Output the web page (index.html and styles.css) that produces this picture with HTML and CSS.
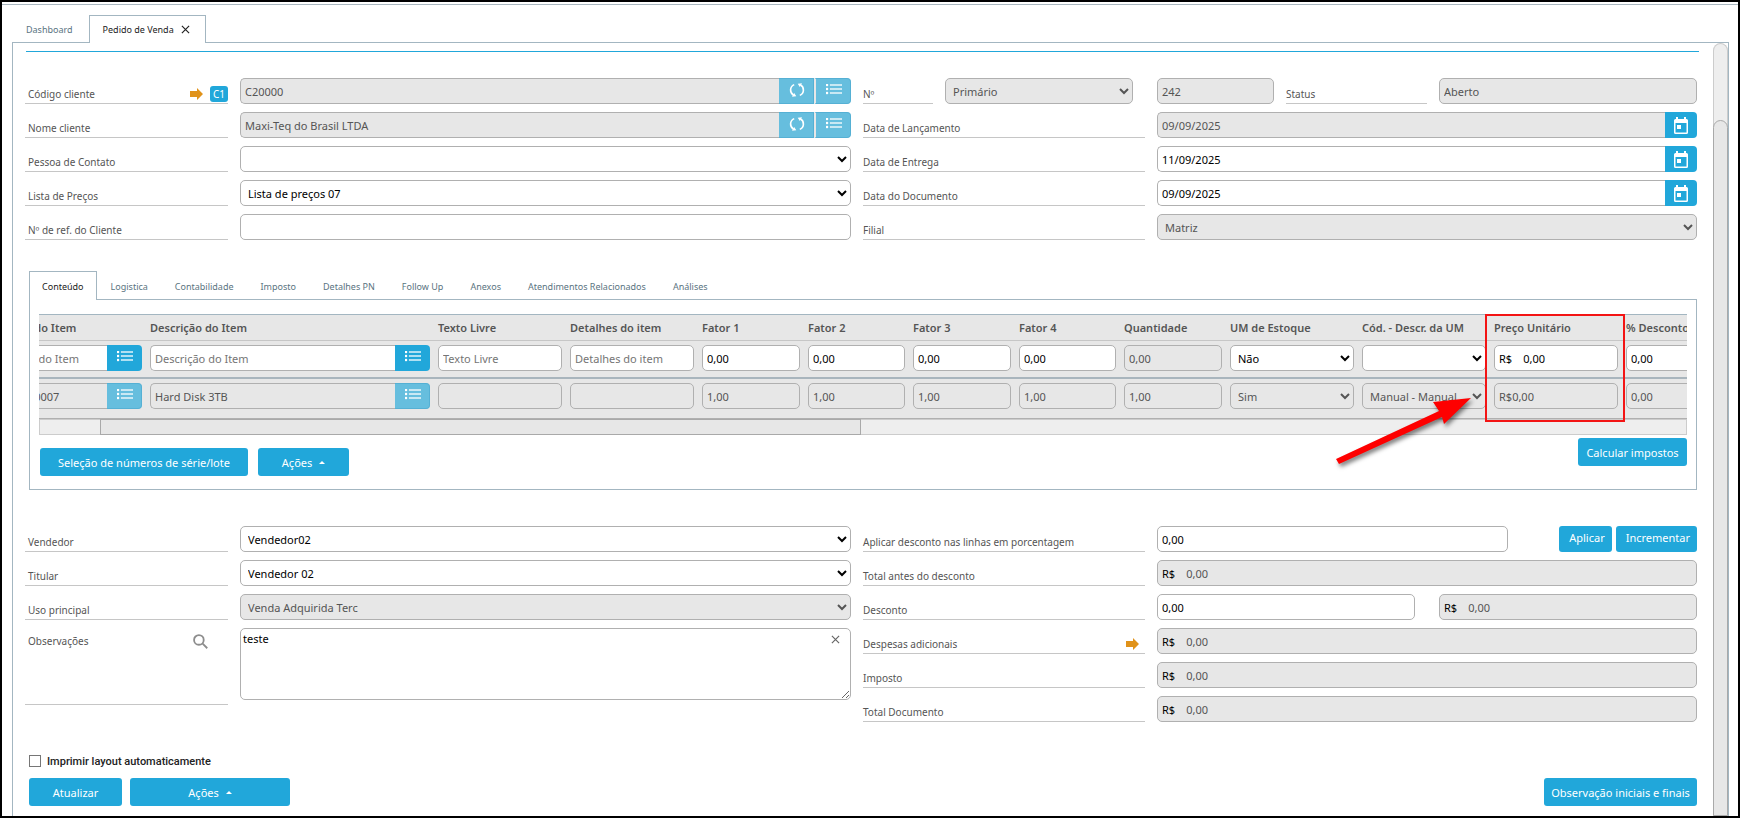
FILE: index.html
```html
<!DOCTYPE html>
<html lang="pt-BR">

<head>
    <meta charset="UTF-8">
    <meta name="viewport" content="width=device-width, initial-scale=1.0">
    <title>Pedido de Venda</title>

    <link rel="stylesheet" href="styles.css">
</head>

<body>
    <svg class="simbolos" aria-hidden="true">
        <symbol id="icoLista" viewBox="0 0 16 11">
            <path d="M0 0h2v2H0zM0 4h2v2H0zM0 8h2v2H0zM4 0.500h12v1H4zM4 4.500h12v1H4zM4 8.500h12v1H4z" fill="currentColor" stroke="currentColor" stroke-width="0.300" />
        </symbol>
        <symbol id="icoAtualiza" viewBox="0 0 16 16">
            <path d="M5.200 2.600C0.500 4.800 0.500 10.800 4.600 13.200M10.800 13.400C15.500 11.200 15.500 5.200 11.400 2.800" fill="none" stroke="currentColor" stroke-width="1.600" />
            <path d="M3 14.800L7.300 14.300 5.200 10.900zM13 1.200L8.700 1.700 10.800 5.100z" fill="currentColor" />
        </symbol>
        <symbol id="icoData" viewBox="0 0 14 17">
            <path d="M2 0h2v2h6V0h2v2h.500A1.500 1.500 0 0 1 14 3.500v12A1.500 1.500 0 0 1 12.500 17h-11A1.500 1.500 0 0 1 0 15.500v-12A1.500 1.500 0 0 1 1.500 2H2zM1.500 6v9.500h11V6zM3 8h4v4H3z" fill="currentColor" fill-rule="evenodd" />
        </symbol>
        <symbol id="icoSeta" viewBox="0 0 13 12">
            <path d="M0 3h7V0l6 6-6 6V9H0z" fill="#e0921a" />
        </symbol>
        <symbol id="icoFechar" viewBox="0 0 10 10">
            <path d="M1 1l8 8M9 1l-8 8" stroke="currentColor" stroke-width="1.300" />
        </symbol>
    </svg>

    <nav class="abas">
        <a class="aba" href="#">Dashboard</a>
        <a class="aba ativa" href="#">Pedido de Venda <svg class="fechar"><use href="#icoFechar" /></svg></a>
    </nav>

    <main class="painel">
        <div class="conteudo">
            <hr class="linhaTopo">

            <form class="formulario">
                <div class="coluna">
                    <div class="linha esq">
                        <div class="rotulo">
                            <label for="iCodigo">Código cliente</label>
                            <svg class="seta"><use href="#icoSeta" /></svg>
                            <button type="button" class="c1">C1</button>
                        </div>
                        <div class="grupo">
                            <input class="campo" type="text" id="iCodigo" value="C20000" disabled>
                            <button type="button" class="icone" aria-label="Atualizar código" disabled><svg class="atualiza"><use href="#icoAtualiza" /></svg></button>
                            <button type="button" class="icone" aria-label="Listar códigos" disabled><svg class="lista"><use href="#icoLista" /></svg></button>
                        </div>
                    </div>
                    <div class="linha esq">
                        <div class="rotulo"><label for="iNome">Nome cliente</label></div>
                        <div class="grupo">
                            <input class="campo" type="text" id="iNome" value="Maxi-Teq do Brasil LTDA" disabled>
                            <button type="button" class="icone" aria-label="Atualizar nome" disabled><svg class="atualiza"><use href="#icoAtualiza" /></svg></button>
                            <button type="button" class="icone" aria-label="Listar nomes" disabled><svg class="lista"><use href="#icoLista" /></svg></button>
                        </div>
                    </div>
                    <div class="linha esq">
                        <div class="rotulo"><label for="iContato">Pessoa de Contato</label></div>
                        <select class="campo" id="iContato"><option></option></select>
                    </div>
                    <div class="linha esq">
                        <div class="rotulo"><label for="iPrecos">Lista de Preços</label></div>
                        <select class="campo" id="iPrecos"><option>Lista de preços 07</option></select>
                    </div>
                    <div class="linha esq">
                        <div class="rotulo"><label for="iRef">Nº de ref. do Cliente</label></div>
                        <input class="campo" type="text" id="iRef">
                    </div>
                </div>

                <div class="coluna">
                    <div class="linha dir">
                        <div class="numero">
                            <div class="rotulo"><label for="iSerie">Nº</label></div>
                            <select class="campo" id="iSerie" disabled><option>Primário</option></select>
                        </div>
                        <div class="status">
                            <input class="campo" type="text" aria-label="Número do pedido" value="242" disabled>
                            <div class="rotulo"><label for="iStatus">Status</label></div>
                            <input class="campo" type="text" id="iStatus" value="Aberto" disabled>
                        </div>
                    </div>
                    <div class="linha dir">
                        <div class="rotulo"><label for="iLanc">Data de Lançamento</label></div>
                        <div class="grupo">
                            <input class="campo" type="text" id="iLanc" value="09/09/2025" disabled>
                            <button type="button" class="icone data" aria-label="Escolher data de lançamento"><svg class="calendario"><use href="#icoData" /></svg></button>
                        </div>
                    </div>
                    <div class="linha dir">
                        <div class="rotulo"><label for="iEntrega">Data de Entrega</label></div>
                        <div class="grupo">
                            <input class="campo" type="text" id="iEntrega" value="11/09/2025">
                            <button type="button" class="icone data" aria-label="Escolher data de entrega"><svg class="calendario"><use href="#icoData" /></svg></button>
                        </div>
                    </div>
                    <div class="linha dir">
                        <div class="rotulo"><label for="iDoc">Data do Documento</label></div>
                        <div class="grupo">
                            <input class="campo" type="text" id="iDoc" value="09/09/2025">
                            <button type="button" class="icone data" aria-label="Escolher data do documento"><svg class="calendario"><use href="#icoData" /></svg></button>
                        </div>
                    </div>
                    <div class="linha dir">
                        <div class="rotulo"><label for="iFilial">Filial</label></div>
                        <select class="campo" id="iFilial" disabled><option>Matriz</option></select>
                    </div>
                </div>
            </form>

            <nav class="subAbas">
                <a class="subAba ativa" href="#">Conteúdo</a>
                <a class="subAba" href="#">Logistica</a>
                <a class="subAba" href="#">Contabilidade</a>
                <a class="subAba" href="#">Imposto</a>
                <a class="subAba" href="#">Detalhes PN</a>
                <a class="subAba" href="#">Follow Up</a>
                <a class="subAba" href="#">Anexos</a>
                <a class="subAba" href="#">Atendimentos Relacionados</a>
                <a class="subAba" href="#">Análises</a>
            </nav>

            <section class="itens">
                <div class="rolagem">
                    <table>
                        <colgroup>
                            <col class="colItem">
                            <col class="colDescr">
                            <col class="colTexto">
                            <col class="colTexto">
                            <col class="colFator">
                            <col class="colFator2">
                            <col class="colFator">
                            <col class="colFator2">
                            <col class="colFator">
                            <col class="colTexto">
                            <col class="colTexto">
                            <col class="colTexto">
                            <col class="colTexto">
                        </colgroup>
                        <thead>
                            <tr>
                                <th>Código do Item</th>
                                <th>Descrição do Item</th>
                                <th>Texto Livre</th>
                                <th>Detalhes do item</th>
                                <th>Fator 1</th>
                                <th>Fator 2</th>
                                <th>Fator 3</th>
                                <th>Fator 4</th>
                                <th>Quantidade</th>
                                <th>UM de Estoque</th>
                                <th>Cód. - Descr. da UM</th>
                                <th>Preço Unitário</th>
                                <th>% Desconto</th>
                            </tr>
                        </thead>
                        <tbody>
                            <tr class="novo">
                                <td>
                                    <div class="grupo">
                                        <input class="campo" type="text" aria-label="Código do Item" placeholder="Código do Item">
                                        <button type="button" class="icone" aria-label="Listar itens"><svg class="lista"><use href="#icoLista" /></svg></button>
                                    </div>
                                </td>
                                <td>
                                    <div class="grupo">
                                        <input class="campo" type="text" aria-label="Descrição do Item" placeholder="Descrição do Item">
                                        <button type="button" class="icone" aria-label="Listar descrições"><svg class="lista"><use href="#icoLista" /></svg></button>
                                    </div>
                                </td>
                                <td><input class="campo" type="text" aria-label="Texto Livre" placeholder="Texto Livre"></td>
                                <td><input class="campo" type="text" aria-label="Detalhes do item" placeholder="Detalhes do item"></td>
                                <td><input class="campo" type="text" aria-label="Fator 1" value="0,00"></td>
                                <td><input class="campo" type="text" aria-label="Fator 2" value="0,00"></td>
                                <td><input class="campo" type="text" aria-label="Fator 3" value="0,00"></td>
                                <td><input class="campo" type="text" aria-label="Fator 4" value="0,00"></td>
                                <td><input class="campo" type="text" aria-label="Quantidade" value="0,00" disabled></td>
                                <td><select class="campo" aria-label="UM de Estoque"><option>Não</option></select></td>
                                <td><select class="campo" aria-label="Descrição da UM"><option></option></select></td>
                                <td><div class="campo moeda"><span>R$</span><input type="text" aria-label="Preço Unitário" value="0,00"></div></td>
                                <td><input class="campo" type="text" aria-label="% Desconto" value="0,00"></td>
                            </tr>
                            <tr>
                                <td>
                                    <div class="grupo">
                                        <input class="campo" type="text" aria-label="Código do Item, linha 1" value="I000000007" disabled>
                                        <button type="button" class="icone" aria-label="Listar itens, linha 1" disabled><svg class="lista"><use href="#icoLista" /></svg></button>
                                    </div>
                                </td>
                                <td>
                                    <div class="grupo">
                                        <input class="campo" type="text" aria-label="Descrição do Item, linha 1" value="Hard Disk 3TB" disabled>
                                        <button type="button" class="icone" aria-label="Listar descrições, linha 1" disabled><svg class="lista"><use href="#icoLista" /></svg></button>
                                    </div>
                                </td>
                                <td><input class="campo" type="text" aria-label="Texto Livre, linha 1" disabled></td>
                                <td><input class="campo" type="text" aria-label="Detalhes do item, linha 1" disabled></td>
                                <td><input class="campo" type="text" aria-label="Fator 1, linha 1" value="1,00" disabled></td>
                                <td><input class="campo" type="text" aria-label="Fator 2, linha 1" value="1,00" disabled></td>
                                <td><input class="campo" type="text" aria-label="Fator 3, linha 1" value="1,00" disabled></td>
                                <td><input class="campo" type="text" aria-label="Fator 4, linha 1" value="1,00" disabled></td>
                                <td><input class="campo" type="text" aria-label="Quantidade, linha 1" value="1,00" disabled></td>
                                <td><select class="campo" aria-label="UM de Estoque, linha 1" disabled><option>Sim</option></select></td>
                                <td><select class="campo" aria-label="Descrição da UM, linha 1" disabled><option>Manual - Manual</option></select></td>
                                <td><input class="campo" type="text" aria-label="Preço Unitário, linha 1" value="R$0,00" disabled></td>
                                <td><input class="campo" type="text" aria-label="% Desconto, linha 1" value="0,00" disabled></td>
                            </tr>
                        </tbody>
                    </table>
                </div>
                <div class="barraH"><div class="barraHPolegar"></div></div>

                <div class="acoesItens">
                    <button type="button" class="botao serie">Seleção de números de série/lote</button>
                    <button type="button" class="botao acoes">Ações <span class="caret"></span></button>
                    <button type="button" class="botao calcular">Calcular impostos</button>
                </div>

                <!-- Destaque do preço unitário -->
                <div class="destaque"></div>
                <svg class="flecha" viewBox="0 0 145 80">
                    <path d="M0 61L103 13 97 4 135 0 108 26 106 19 3 66z" fill="#fe0000" />
                </svg>
            </section>

            <form class="formulario rodape">
                <div class="coluna">
                    <div class="linha esq">
                        <div class="rotulo"><label for="iVendedor">Vendedor</label></div>
                        <select class="campo" id="iVendedor"><option>Vendedor02</option></select>
                    </div>
                    <div class="linha esq">
                        <div class="rotulo"><label for="iTitular">Titular</label></div>
                        <select class="campo" id="iTitular"><option>Vendedor 02</option></select>
                    </div>
                    <div class="linha esq">
                        <div class="rotulo"><label for="iUso">Uso principal</label></div>
                        <select class="campo" id="iUso" disabled><option>Venda Adquirida Terc</option></select>
                    </div>
                    <div class="linha esq">
                        <div class="rotulo alto">
                            <label for="iObs">Observações</label>
                            <svg class="lupa" viewBox="0 0 14 14"><path d="M9 9L13.300 13.300M5.500 1a4.500 4.500 0 1 0 0 9 4.500 4.500 0 0 0 0-9z" fill="none" stroke="#8d8d8d" stroke-width="1.700" /></svg>
                        </div>
                        <div class="obs">
                            <textarea class="campo" id="iObs">teste</textarea>
                            <button type="button" class="limpar" aria-label="Limpar observações"><svg class="fechar"><use href="#icoFechar" /></svg></button>
                        </div>
                    </div>
                </div>

                <div class="coluna">
                    <div class="linha dir">
                        <div class="rotulo"><label for="iAplicar">Aplicar desconto nas linhas em porcentagem</label></div>
                        <div class="aplicar">
                            <input class="campo" type="text" id="iAplicar" value="0,00">
                            <button type="button" class="botao menor">Aplicar</button>
                            <button type="button" class="botao menor">Incrementar</button>
                        </div>
                    </div>
                    <div class="linha dir">
                        <div class="rotulo"><label for="iAntes">Total antes do desconto</label></div>
                        <div class="campo moeda inativo"><span>R$</span><input type="text" id="iAntes" value="0,00" disabled></div>
                    </div>
                    <div class="linha dir">
                        <div class="rotulo"><label for="iDesc">Desconto</label></div>
                        <div class="desconto">
                            <input class="campo" type="text" id="iDesc" value="0,00">
                            <div class="campo moeda inativo"><span>R$</span><input type="text" aria-label="Valor do desconto" value="0,00" disabled></div>
                        </div>
                    </div>
                    <div class="linha dir">
                        <div class="rotulo">
                            <label for="iDespesas">Despesas adicionais</label>
                            <svg class="seta"><use href="#icoSeta" /></svg>
                        </div>
                        <div class="campo moeda inativo"><span>R$</span><input type="text" id="iDespesas" value="0,00" disabled></div>
                    </div>
                    <div class="linha dir">
                        <div class="rotulo"><label for="iImposto">Imposto</label></div>
                        <div class="campo moeda inativo"><span>R$</span><input type="text" id="iImposto" value="0,00" disabled></div>
                    </div>
                    <div class="linha dir">
                        <div class="rotulo"><label for="iTotal">Total Documento</label></div>
                        <div class="campo moeda inativo"><span>R$</span><input type="text" id="iTotal" value="0,00" disabled></div>
                    </div>
                </div>
            </form>

            <div class="imprimir">
                <input type="checkbox" id="iImprimir">
                <label for="iImprimir">Imprimir layout automaticamente</label>
            </div>
            <div class="acoesPedido">
                <button type="button" class="botao atualizar">Atualizar</button>
                <button type="button" class="botao acoesMaior">Ações <span class="caret"></span></button>
                <button type="button" class="botao finais">Observação iniciais e finais</button>
            </div>
        </div>
        <div class="barraV"><div class="barraVPolegar"></div></div>
    </main>
</body>

</html>
```

FILE: styles.css
```css
* {
    margin: 0;
    padding: 0;
    box-sizing: border-box;
}

body {
    display: flex;
    flex-direction: column;
    height: 100vh;
    overflow: hidden;
    border: 2px solid #000;
    background-color: #fff;
    color: #555;
    font-family: "Noto Sans", sans-serif;
    font-size: 11px;
}

body::before {
    content: "";
    margin-top: 2px;
    border-top: 1px solid #a9b7c0;
}

input,
select,
textarea,
button {
    font-family: inherit;
    font-size: 11px;
}

a {
    color: #5a7481;
    text-decoration: none;
}

.simbolos {
    display: none;
}

/* Abas principais */
.abas {
    display: flex;
    flex-shrink: 0;
    height: 28px;
    margin: 10px 0 0 10px;
    position: relative;
    z-index: 1;
}

.aba {
    display: flex;
    align-items: center;
    gap: 7px;
    height: 28px;
    padding: 0 16px 0 14px;
    font-size: 9px;
}

.aba.ativa {
    padding: 0 15px 0 13px;
    border: 1px solid #a3b6c1;
    border-bottom: none;
    background-color: #fff;
    color: #222;
}

.fechar {
    width: 9px;
    height: 9px;
}

/* Painel */
.painel {
    display: flex;
    flex: 1;
    min-height: 0;
    margin: -1px 9px 0 10px;
    border: 1px solid #a3b6c1;
    border-bottom: none;
}

.conteudo {
    flex: 1;
    min-width: 0;
    padding: 8px 14px 0 12px;
}

.linhaTopo {
    margin-left: 1px;
    border: none;
    border-top: 1px solid #21a7da;
}

.barraV {
    width: 15px;
    border: 1px solid #ccc;
    border-bottom: none;
    border-radius: 8px 8px 0 0;
    background-color: #eee;
    padding-top: 76px;
}

.barraVPolegar {
    height: 100%;
    border: 1px solid #a9a9a9;
    border-radius: 8px 8px 0 0;
    background-color: #e7e7e7;
    margin: 0 -1px;
}

/* Formulários */
.formulario {
    display: grid;
    grid-template-columns: 826fr 834fr;
    gap: 12px;
    margin: 26px 2px 0 0;
}

.coluna {
    display: flex;
    flex-direction: column;
    gap: 8px;
}

.linha {
    display: grid;
    gap: 12px;
}

.esq {
    grid-template-columns: 203fr 611fr;
}

.dir {
    grid-template-columns: 282fr 540fr;
}

.rotulo {
    display: flex;
    align-items: center;
    height: 26px;
    padding: 6px 0 0 3px;
    border-bottom: 1px solid #c6c6c6;
    font-size: 10px;
}

.dir .rotulo {
    padding-left: 0;
}

.rotulo label {
    flex: 1;
    white-space: nowrap;
}

.seta {
    width: 13px;
    height: 12px;
    margin-right: 6px;
}

.c1 {
    width: 18px;
    height: 16px;
    margin-left: 1px;
    border: none;
    border-radius: 3px;
    background-color: #21a7da;
    color: #fff;
    font-size: 10px;
    line-height: 16px;
}

.campo {
    width: 100%;
    min-width: 0;
    height: 26px;
    padding: 0 4px;
    border: 1px solid #b0b0b0;
    border-radius: 5px;
    background-color: #fff;
    color: #000;
}

.campo:disabled,
.campo.inativo {
    background-color: #e7e7e7;
    color: #555;
    opacity: 1;
}

select.campo {
    padding: 0 3px;
}

::placeholder {
    color: #757575;
}

.grupo {
    display: flex;
}

.grupo .campo {
    flex: 1;
    border-right: none;
    border-radius: 5px 0 0 5px;
}

.icone {
    display: flex;
    align-items: center;
    justify-content: center;
    width: 35px;
    height: 26px;
    padding: 0 0 3px 1px;
    border: none;
    background-color: #21a7da;
    color: #fff;
}

.icone:disabled {
    background-color: #66bede;
    border: 1px solid #55b0d4;
    border-left: none;
}

.icone:last-child {
    border-radius: 0 4px 4px 0;
}

.icone + .icone {
    width: 37px;
    border-left: 2px solid #e7e7e7;
}

.data {
    width: 32px;
    padding: 0;
}

.lista {
    width: 16px;
    height: 11px;
}

.atualiza {
    width: 16px;
    height: 16px;
}

.calendario {
    width: 14px;
    height: 17px;
}

.numero {
    display: grid;
    grid-template-columns: 70fr 188fr;
    gap: 12px;
    padding-right: 12px;
}

.status {
    display: grid;
    grid-template-columns: 117fr 141fr 258fr;
    gap: 12px;
}

.moeda {
    display: flex;
    align-items: center;
    gap: 11px;
}

.moeda span {
    color: #000;
}

.moeda input {
    flex: 1;
    min-width: 0;
    border: none;
    background: none;
    color: inherit;
}

/* Abas dos itens */
.subAbas {
    display: flex;
    height: 29px;
    margin: 31px 2px 0 4px;
    position: relative;
    z-index: 1;
}

.subAba {
    padding: 0 14px 0 13px;
    font-size: 9px;
    line-height: 31px;
    white-space: nowrap;
}

.subAba.ativa {
    padding: 0 12px;
    margin-right: 1px;
    border: 1px solid #a3b6c1;
    border-bottom: none;
    background-color: #fff;
    color: #222;
    line-height: 29px;
}

.itens {
    position: relative;
    margin: -1px 2px 0 4px;
    padding: 14px 9px 13px 9px;
    border: 1px solid #a3b6c1;
}

.rolagem {
    overflow: hidden;
    border-top: 1px solid #a3b6c1;
    border-bottom: 1px solid #b0b0b0;
    background-color: #e7e7e7;
}

/* Tabela deslocada pela rolagem horizontal */
table {
    width: 1764px;
    margin-left: -49px;
    table-layout: fixed;
    border-spacing: 0;
}

.colItem {
    width: 156px;
}

.colDescr {
    width: 288px;
}

.colTexto {
    width: 132px;
}

.colFator {
    width: 106px;
}

.colFator2 {
    width: 105px;
}

th {
    height: 26px;
    padding: 0 4px;
    border-bottom: 1px solid #c6c6c6;
    font-size: 11px;
    font-weight: 600;
    text-align: left;
    white-space: nowrap;
}

td {
    height: 39px;
    padding: 4px 4px 0;
    vertical-align: top;
}

.novo td {
    height: 38px;
    border-bottom: 2px solid #a9b5bd;
}

td > .campo {
    vertical-align: top;
}

.barraH {
    height: 16px;
    padding-left: 60px;
    border: 1px solid #ccc;
    background-color: #eee;
}

.barraHPolegar {
    width: 48%;
    height: 16px;
    margin: -1px 0;
    border: 1px solid #a9a9a9;
    background-color: #e7e7e7;
}

.botao {
    height: 28px;
    border: none;
    border-radius: 3px;
    background-color: #21a7da;
    color: #fff;
    font-size: 11px;
}

.acoesItens {
    display: flex;
    align-items: flex-end;
    gap: 10px;
    height: 41px;
    padding-left: 1px;
}

.serie {
    width: 208px;
}

.acoes {
    width: 91px;
}

.calcular {
    width: 109px;
    margin-left: auto;
    align-self: flex-start;
    margin-top: 3px;
}

.caret {
    display: inline-block;
    margin: 0 0 3px 4px;
    border: 3px solid transparent;
    border-top: none;
    border-bottom-color: #fff;
}

.destaque {
    position: absolute;
    top: 14px;
    right: 71px;
    width: 140px;
    height: 108px;
    border: 2px solid #f31414;
}

.flecha {
    position: absolute;
    top: 98px;
    right: 215px;
    width: 145px;
    height: 80px;
    filter: drop-shadow(2px 3px 2px rgba(0, 0, 0, 0.5));
}

/* Totais */
.rodape {
    margin-top: 36px;
}

.alto {
    align-items: flex-start;
    height: 77px;
    padding-top: 6px;
}

.lupa {
    flex: none;
    width: 15px;
    height: 15px;
    margin-right: 20px;
}

.obs {
    position: relative;
    height: 72px;
}

.obs textarea {
    display: block;
    height: 72px;
    padding: 2px;
}

.limpar {
    position: absolute;
    top: 7px;
    right: 11px;
    border: none;
    background: none;
    color: #666;
    line-height: 9px;
}

.aplicar {
    display: flex;
    gap: 4px;
}

.aplicar .campo {
    width: 65%;
    margin-right: auto;
}

.menor {
    height: 26px;
    padding: 0 7px 4px 10px;
}

.desconto {
    display: grid;
    grid-template-columns: 1fr 1fr;
    gap: 24px;
}

.imprimir {
    display: flex;
    align-items: center;
    gap: 6px;
    height: 18px;
    margin: 30px 0 0 4px;
    color: #222;
    font-family: Roboto, sans-serif;
    font-weight: 500;
}

.imprimir input {
    appearance: none;
    width: 12px;
    height: 12px;
    border: 1px solid #767676;
}

.imprimir input:checked {
    background-color: #21a7da;
}

.acoesPedido {
    display: flex;
    gap: 8px;
    margin: 8px 2px 0 4px;
}

.atualizar {
    width: 93px;
}

.acoesMaior {
    width: 160px;
}

.finais {
    width: 153px;
    margin-left: auto;
}
```
